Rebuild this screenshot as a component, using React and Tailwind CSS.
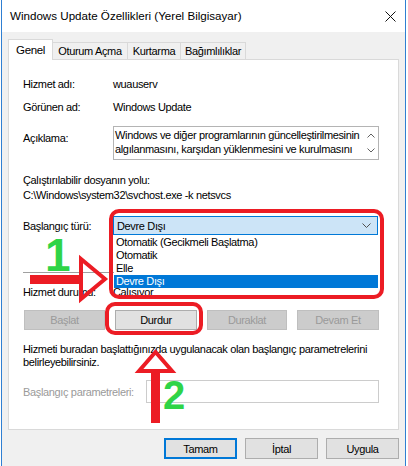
import React from "react";

// Windows service properties dialog with red/green annotations on top

const RED = "#ec1c24";

const Btn = ({ children, disabled, className = "" }) => (
  <div
    className={`h-[20px] flex items-center justify-center border ${
      disabled
        ? "bg-[#cccccc] border-[#bfbfbf] text-[#9a9a9a]"
        : "bg-[#e1e1e1] border-[#adadad] text-black"
    } ${className}`}
  >
    {children}
  </div>
);

const Row = ({ label, children, className = "" }) => (
  <div className={`flex items-center h-[16px] ${className}`}>
    <div className="w-[90px] shrink-0">{label}</div>
    {children}
  </div>
);

export default function App() {
  return (
    <div className="relative w-[408px] h-[466px] bg-white overflow-hidden text-[11px] leading-[16px] tracking-[-0.35px] text-black whitespace-nowrap font-['Liberation_Sans',Arial,sans-serif]">
      {/* Window */}
      <div className="ml-px w-[405px] h-[466px] bg-[#f0f0f0] border-x border-[#2f7fd2] flex flex-col">
        {/* Title bar */}
        <div className="h-[32px] bg-white flex items-center justify-between pl-[8px] pr-[9px] shrink-0">
          <span className="text-[11.6px] tracking-normal">Windows Update Özellikleri (Yerel Bilgisayar)</span>
          <svg width="11" height="11" viewBox="0 0 11 11">
            <path d="M0.5 0.5 L10.5 10.5 M10.5 0.5 L0.5 10.5" stroke="#111" strokeWidth="1" />
          </svg>
        </div>

        {/* Tabs */}
        <div className="flex items-end ml-[6px] mt-[7px] h-[20px] relative z-10">
          <div className="w-[45px] h-[21px] -mb-px bg-white border border-b-0 border-[#d9d9d9] flex items-center justify-center pb-[1px] text-[11.5px]">
            Genel
          </div>
          <div className="w-[75px] h-[17px] border border-l-0 border-b-0 border-[#d9d9d9] flex items-center justify-center">
            Oturum Açma
          </div>
          <div className="w-[53px] h-[17px] border border-l-0 border-b-0 border-[#d9d9d9] flex items-center justify-center">
            Kurtarma
          </div>
          <div className="w-[65px] h-[17px] border border-l-0 border-b-0 border-[#d9d9d9] flex items-center justify-center">
            Bağımlılıklar
          </div>
        </div>

        {/* Panel */}
        <div className="ml-[6px] w-[391px] h-[371px] bg-white border border-[#d9d9d9] flex flex-col pl-[14px]">
          <Row label="Hizmet adı:" className="mt-[16px]">
            <span>wuauserv</span>
          </Row>
          <Row label="Görünen ad:" className="mt-[7px]">
            <span>Windows Update</span>
          </Row>

          <div className="flex items-start mt-[11px]">
            <div className="w-[90px] shrink-0 mt-[4px]">Açıklama:</div>
            <div className="w-[266px] h-[34px] border border-[#b4b4b4] flex">
              <div className="flex-1 pl-[1px] pt-[1px] leading-[14px] overflow-hidden">
                <div>Windows ve diğer programlarının güncelleştirilmesinin</div>
                <div>algılanmasını, karşıdan yüklenmesini ve kurulmasını</div>
              </div>
              <div className="w-[15px] flex flex-col items-center justify-between py-[6px]">
                <svg width="8" height="5" viewBox="0 0 8 5">
                  <path d="M0.5 4.5 L4 1 L7.5 4.5" stroke="#606060" fill="none" />
                </svg>
                <svg width="8" height="5" viewBox="0 0 8 5">
                  <path d="M0.5 0.5 L4 4 L7.5 0.5" stroke="#606060" fill="none" />
                </svg>
              </div>
            </div>
          </div>

          <div className="mt-[13px] leading-[15px]">
            <div>Çalıştırılabilir dosyanın yolu:</div>
            <div>C:\Windows\system32\svchost.exe -k netsvcs</div>
          </div>

          <div className="flex items-center mt-[13px] h-[19px]">
            <div className="w-[90px] shrink-0">Başlangıç türü:</div>
            <div className="w-[265px] h-[19px] bg-[#cce4f7] border border-[#0078d7] flex items-center justify-between pl-[3px] pr-[6px]">
              <span>Devre Dışı</span>
              <svg width="9" height="5" viewBox="0 0 9 5">
                <path d="M0.5 0.5 L4.5 4.5 L8.5 0.5" stroke="#505050" fill="none" />
              </svg>
            </div>
          </div>

          <div className="mt-[37px] h-px w-[355px] bg-[#a0a0a0]" />

          <Row label="Hizmet durumu:" className="mt-[11px]">
            <span>Çalışıyor</span>
          </Row>

          <div className="mt-[10px] ml-px w-[355px] flex justify-between">
            <Btn disabled className="w-[81px]">Başlat</Btn>
            <Btn className="w-[82px]">Durdur</Btn>
            <Btn disabled className="w-[80px]">Duraklat</Btn>
            <Btn disabled className="w-[82px]">Devam Et</Btn>
          </div>

          <div className="mt-[13px] leading-[13px]">
            <div>Hizmeti buradan başlattığınızda uygulanacak olan başlangıç parametrelerini</div>
            <div>belirleyebilirsiniz.</div>
          </div>

          <div className="flex items-center mt-[11px] h-[23px]">
            <div className="w-[123px] shrink-0 text-[#9a9a9a]">Başlangıç parametreleri:</div>
            <div className="w-[233px] h-[23px] border border-[#cccccc]" />
          </div>
        </div>

        {/* Dialog buttons */}
        <div className="flex justify-end gap-[8px] pr-[6px] mt-[8px]">
          <div className="w-[73px] h-[21px] bg-[#e1e1e1] border-2 border-[#0078d7] flex items-center justify-center">
            Tamam
          </div>
          <div className="w-[73px] h-[21px] bg-[#e1e1e1] border border-[#adadad] flex items-center justify-center">
            İptal
          </div>
          <div className="w-[73px] h-[21px] bg-[#e1e1e1] border border-[#adadad] flex items-center justify-center">
            Uygula
          </div>
        </div>
      </div>

      {/* Open dropdown list */}
      <div className="absolute left-[114px] top-[236px] w-[264px] bg-white flex flex-col leading-[13px]">
        <div className="h-[13px] pl-[2px]">Otomatik (Gecikmeli Başlatma)</div>
        <div className="h-[13px] pl-[2px]">Otomatik</div>
        <div className="h-[13px] pl-[2px]">Elle</div>
        <div className="h-[13px] pl-[2px] bg-[#0078d7] text-white">Devre Dışı</div>
      </div>

      {/* Annotations */}
      <div className="absolute left-[109px] top-[209px] w-[275px] h-[90px] border-4 border-[#ec1c24] rounded-[10px]" />
      <div className="absolute left-[105px] top-[302px] w-[98px] h-[33px] border-4 border-[#ec1c24] rounded-[10px]" />

      <svg className="absolute left-0 top-0" width="408" height="466" viewBox="0 0 408 466">
        <rect x="30" y="275" width="52" height="9" fill={RED} />
        <path d="M81 259 L81 299 L105 279 Z" fill="none" stroke={RED} strokeWidth="4" strokeLinejoin="miter" />
        <rect x="151" y="370" width="9" height="53" fill={RED} />
        <path d="M155.5 352 L139 371 L172 371 Z" fill="none" stroke={RED} strokeWidth="4" />
      </svg>

      <div className="absolute left-[45px] top-[232px] text-[46px] leading-[46px] font-bold text-[#2fd447]">1</div>
      <div className="absolute left-[163px] top-[375px] text-[40px] leading-[40px] font-bold text-[#2fd447]">2</div>
    </div>
  );
}
